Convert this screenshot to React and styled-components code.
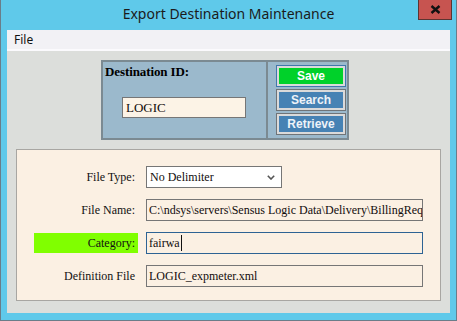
import React from "react";
import styled, { createGlobalStyle } from "styled-components";

const GlobalStyle = createGlobalStyle`
  html, body {
    margin: 0;
    padding: 0;
    background: #ffffff;
  }
  * {
    box-sizing: border-box;
  }
`;

const Window = styled.div`
  width: 457px;
  height: 321px;
  background: #5fc9ea;
  border: 1px solid #6a7d89;
  border-top: none;
  display: flex;
  flex-direction: column;
`;

const TitleBar = styled.div`
  height: 30px;
  display: grid;
  grid-template-columns: 1fr auto 1fr;
`;

const Title = styled.div`
  grid-column: 2;
  font-family: "Noto Sans", "Open Sans", sans-serif;
  font-size: 14px;
  line-height: 30px;
  color: #1b1b1b;
  margin-top: -1px;
`;

const CloseButton = styled.div`
  grid-column: 3;
  justify-self: end;
  align-self: start;
  width: 34px;
  height: 20px;
  margin-right: 4px;
  background: #c75450;
  border: 1px solid #5c3431;
  border-top: none;
  display: flex;
  align-items: center;
  justify-content: center;
`;

const Client = styled.div`
  flex: 1;
  margin: 0 6px 7px 6px;
  background: #dcdedb;
  display: flex;
  flex-direction: column;
`;

const MenuBar = styled.div`
  height: 21px;
  background: #f2f1f5;
  border-bottom: 2px solid #fbfafd;
  padding-left: 7px;
  font-family: "Noto Sans", "Open Sans", sans-serif;
  font-size: 12px;
  line-height: 19px;
  color: #111;
`;

const Body = styled.div`
  padding: 9px 9px 10px 9px;
  display: flex;
  flex-direction: column;
`;

const TopPanel = styled.div`
  margin-left: 85px;
  width: 248px;
  height: 80px;
  border: 2px solid #7b8a92;
  background: #9bb9cc;
  display: flex;
`;

const IdSection = styled.div`
  width: 163px;
  display: flex;
  flex-direction: column;
  align-items: flex-start;
`;

const IdLabel = styled.div`
  font-family: "Liberation Serif", "Times New Roman", serif;
  font-weight: bold;
  font-size: 13px;
  letter-spacing: -0.1px;
  line-height: 15px;
  padding: 2px 0 0 2px;
  color: #000;
`;

const ButtonSection = styled.div`
  flex: 1;
  border-left: 2px solid #7b8a92;
  padding: 3px 0 0 8px;
  display: flex;
  flex-direction: column;
  gap: 2px;
`;

const ActionButton = styled.div`
  width: 70px;
  height: 22px;
  border: 1px solid ${(p) => (p.$primary ? "#3f77ad" : "#6f7478")};
  box-shadow: inset 0 0 0 2px #dadada;
  background: ${(p) => (p.$primary ? "#00d12a" : "#4682b4")};
  color: ${(p) => (p.$primary ? "#ffffff" : "#eef3f8")};
  font-family: "Liberation Sans", Arial, sans-serif;
  font-weight: bold;
  font-size: 12px;
  line-height: 20px;
  text-align: center;
`;

const Field = styled.div`
  width: ${(p) => p.$width}px;
  height: ${(p) => p.$height || 22}px;
  border: 1px solid ${(p) => (p.$focused ? "#2d6394" : "#767676")};
  background: ${(p) => p.$bg || "#fbf0e3"};
  font-family: "Liberation Serif", "Times New Roman", serif;
  font-size: 12px;
  line-height: ${(p) => (p.$height || 22) - 2}px;
  color: #120c0c;
  padding: 0 2px;
  white-space: nowrap;
  overflow: hidden;
  display: flex;
  align-items: center;
`;

const IdField = styled(Field)`
  margin: 18px 0 0 19px;
  font-size: 13px;
  padding-left: 3px;
`;

const SelectText = styled.span`
  flex: 1;
  padding-left: 1px;
`;

const Caret = styled.span`
  display: inline-block;
  width: 1px;
  height: 16px;
  background: #111;
  margin-left: 1px;
`;

const FormPanel = styled.div`
  margin-top: 9px;
  height: 152px;
  border: 1px solid #a8a6a2;
  background: #fbf0e3;
  padding: 16px 0 0 17px;
  display: grid;
  grid-template-columns: 104px auto;
  grid-auto-rows: 22px;
  column-gap: 8px;
  row-gap: 11px;
`;

const FieldLabel = styled.div`
  align-self: center;
  height: 20px;
  line-height: 20px;
  text-align: right;
  padding-right: 3px;
  background: ${(p) => (p.$highlight ? "#80ff00" : "transparent")};
  font-family: "Liberation Serif", "Times New Roman", serif;
  font-size: 12px;
  color: #111;
`;

const Chevron = () => (
  <svg width="8" height="5" viewBox="0 0 8 5" style={{ marginRight: 4 }}>
    <polyline points="0.8,0.8 4,4 7.2,0.8" fill="none" stroke="#555" strokeWidth="1.6" />
  </svg>
);

const CloseGlyph = () => (
  <svg width="11" height="9" viewBox="0 0 11 9">
    <path d="M1.5 1 L9.5 8 M9.5 1 L1.5 8" stroke="#111" strokeWidth="2.4" />
  </svg>
);

export default function App() {
  return (
    <>
      <GlobalStyle />
      <Window>
        <TitleBar>
          <Title>Export Destination Maintenance</Title>
          <CloseButton>
            <CloseGlyph />
          </CloseButton>
        </TitleBar>
        <Client>
          <MenuBar>File</MenuBar>
          <Body>
            <TopPanel>
              <IdSection>
                <IdLabel>Destination ID:</IdLabel>
                <IdField $width={124} $height={21} $bg="#fcf3e6">LOGIC</IdField>
              </IdSection>
              <ButtonSection>
                <ActionButton $primary>Save</ActionButton>
                <ActionButton>Search</ActionButton>
                <ActionButton>Retrieve</ActionButton>
              </ButtonSection>
            </TopPanel>
            <FormPanel>
              <FieldLabel>File Type:</FieldLabel>
              <Field $width={136} $bg="#ffffff">
                <SelectText>No Delimiter</SelectText>
                <Chevron />
              </Field>
              <FieldLabel>File Name:</FieldLabel>
              <Field $width={277}>
                C:\ndsys\servers\Sensus Logic Data\Delivery\BillingRequest
              </Field>
              <FieldLabel $highlight>Category:</FieldLabel>
              <Field $width={277} $focused>
                fairwa
                <Caret />
              </Field>
              <FieldLabel>Definition File</FieldLabel>
              <Field $width={277}>LOGIC_expmeter.xml</Field>
            </FormPanel>
          </Body>
        </Client>
      </Window>
    </>
  );
}
